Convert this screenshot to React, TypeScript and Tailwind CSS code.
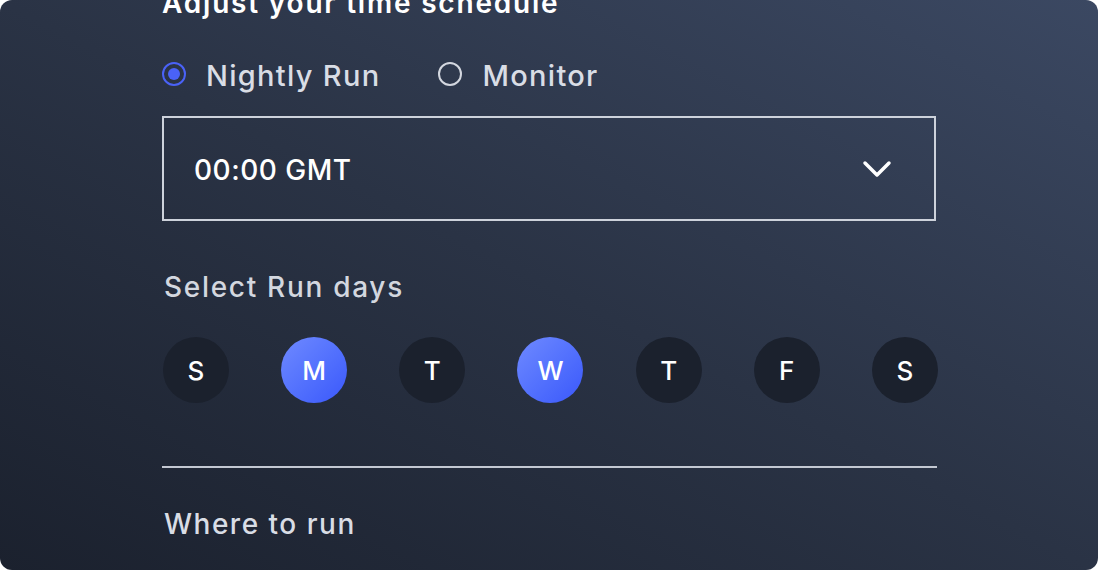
const days = [
  { label: "S", active: false },
  { label: "M", active: true },
  { label: "T", active: false },
  { label: "W", active: true },
  { label: "T", active: false },
  { label: "F", active: false },
  { label: "S", active: false },
];

function Radio({ label, checked }: { label: string; checked: boolean }) {
  return (
    <label className="flex items-center gap-[20px]">
      <span
        className={
          checked
            ? "-mt-[2px] flex h-[24px] w-[24px] items-center justify-center rounded-full border-2 border-[#4a62f7]"
            : "-mt-[2px] flex h-[24px] w-[24px] items-center justify-center rounded-full border-2 border-[#d3d7df]"
        }
      >
        {checked && <span className="h-[12px] w-[12px] rounded-full bg-[#4a62f7]" />}
      </span>
      <span className="pt-[3px] text-[29px] leading-[32px] font-medium tracking-[1.3px] text-[#d9dde5]">{label}</span>
    </label>
  );
}

export default function App() {
  return (
    <div className="h-[570px] w-[1098px] bg-white font-['Inter','Liberation_Sans',sans-serif]">
      <div className="h-full overflow-hidden rounded-[12px] bg-gradient-to-tr from-[#1b212e] via-[#2a3345] to-[#3b4862] pl-[162px]">
        <div className="flex w-[776px] flex-col">
          <h2 className="-mt-[13px] text-[28px] leading-[32px] font-semibold tracking-[1.8px] text-white">
            Adjust your time schedule
          </h2>

          <div className="mt-[38px] flex items-center gap-[58px]">
            <Radio label="Nightly Run" checked />
            <Radio label="Monitor" checked={false} />
          </div>

          <div className="mt-[24px] flex h-[105px] w-[774px] items-center justify-between border-2 border-[#cdd2db] pr-[42px] pl-[30px]">
            <span className="pt-[3px] text-[28px] font-medium tracking-[0.5px] text-white">00:00 GMT</span>
            <svg width="30" height="18" viewBox="0 0 30 18" fill="none">
              <path d="M3 3 L15 15 L27 3" stroke="white" strokeWidth="3.5" strokeLinecap="round" strokeLinejoin="round" />
            </svg>
          </div>

          <p className="mt-[50px] pl-[2px] text-[28px] leading-[32px] font-medium tracking-[1.7px] text-[#d3d7df]">
            Select Run days
          </p>

          <div className="mt-[34px] flex justify-between pl-[1px]">
            {days.map((d, i) => (
              <div
                key={i}
                className={
                  d.active
                    ? "flex h-[66px] w-[66px] items-center justify-center rounded-full bg-gradient-to-br from-[#6f89ff] to-[#3b57fb] text-[26px] font-medium text-white"
                    : "flex h-[66px] w-[66px] items-center justify-center rounded-full bg-[#1b212d] text-[26px] font-medium text-white"
                }
              >
                {d.label}
              </div>
            ))}
          </div>

          <div className="mt-[63px] h-[2px] w-[775px] bg-[#c3c8d2]" />

          <p className="mt-[40px] pl-[2px] text-[28px] leading-[32px] font-medium tracking-[1.5px] text-[#d9dde5]">
            Where to run
          </p>
        </div>
      </div>
    </div>
  );
}
